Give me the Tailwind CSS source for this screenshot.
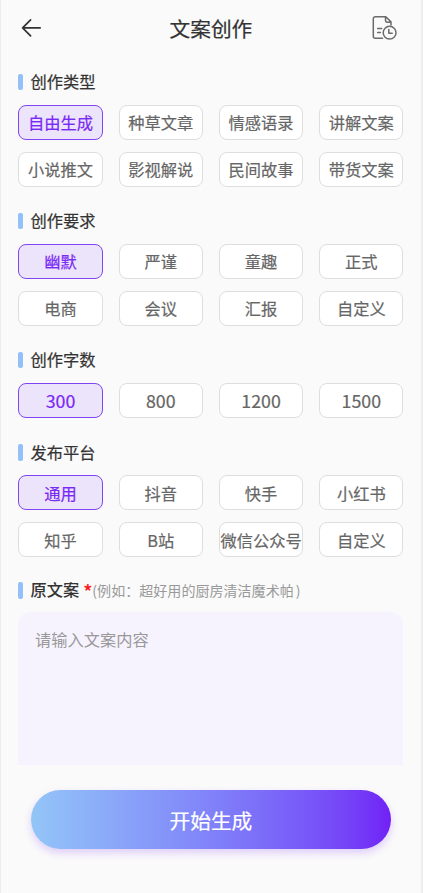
<!DOCTYPE html>
<html lang="zh-CN">
<head>
<meta charset="utf-8">
<meta name="viewport" content="width=device-width, initial-scale=1">
<title>文案创作</title>
<script src="https://cdn.jsdelivr.net/npm/@tailwindcss/browser@4"></script>
</head>
<body class="bg-[#fafafa]">
<main class="flex h-[893px] w-[423px] flex-col overflow-hidden border-l border-r-2 border-[#ededed] bg-[#fafafa] pl-[17.4px] pr-[17.6px] font-['Noto_Sans_CJK_SC',sans-serif] text-[16.25px] font-normal text-[#333] [-webkit-text-stroke:0.2px]">
  <header class="grid h-[56px] shrink-0 grid-cols-[60px_1fr_60px] items-center">
    <button class="pl-[2.6px]" aria-label="返回">
      <svg class="block h-[20px] w-[21px]" viewBox="0 0 21 20" fill="none" stroke="#333" stroke-width="1.7" stroke-linecap="round" stroke-linejoin="round"><path d="M9.6 1.8 1.6 9.8l8 8M1.6 9.8h17.6"/></svg>
    </button>
    <h1 class="text-center text-[20.7px] leading-none">文案创作</h1>
    <button class="flex justify-end pr-[6px]" aria-label="历史记录">
      <svg class="block h-[26px] w-[26px]" viewBox="0 0 26 26" fill="none" stroke="#6a6a6a" stroke-width="1.5" stroke-linecap="round" stroke-linejoin="round"><path d="M11.5 23.2H4.3a2 2 0 0 1-2-2V3.7a2 2 0 0 1 2-2H14.8l5.2 5.2v3M14.5 2v3.2a2 2 0 0 0 2 2H20M6.7 13.4h4M6.7 17.5h2.6"/><circle cx="18.6" cy="17.7" r="6.4"/><path d="M17.8 14.6v3.7h3.4"/></svg>
    </button>
  </header>

  <section class="mt-[14px]">
    <h2 class="flex h-[24px] items-center gap-[7px] leading-none"><i class="h-[16.5px] w-[5px] rounded-[2px] bg-[#93c0f9]"></i><span class="-translate-y-[1px]">创作类型</span></h2>
    <div class="mt-[11px] grid grid-cols-4 gap-x-[16.2px] gap-y-[11.8px] text-[#666] *:flex *:h-[35px] *:items-center *:justify-center *:whitespace-nowrap *:rounded-[8px] *:border *:leading-none">
      <button class="border-[#8144f5] bg-[#ebe4fa] text-[#7a28f5]">自由生成</button>
      <button class="border-[#dedede] bg-white">种草文章</button>
      <button class="border-[#dedede] bg-white">情感语录</button>
      <button class="border-[#dedede] bg-white">讲解文案</button>
      <button class="border-[#dedede] bg-white">小说推文</button>
      <button class="border-[#dedede] bg-white">影视解说</button>
      <button class="border-[#dedede] bg-white">民间故事</button>
      <button class="border-[#dedede] bg-white">带货文案</button>
    </div>
  </section>

  <section class="mt-[22.3px]">
    <h2 class="flex h-[24px] items-center gap-[7px] leading-none"><i class="h-[16.5px] w-[5px] rounded-[2px] bg-[#93c0f9]"></i><span class="-translate-y-[1px]">创作要求</span></h2>
    <div class="mt-[11px] grid grid-cols-4 gap-x-[16.2px] gap-y-[11.8px] text-[#666] *:flex *:h-[35px] *:items-center *:justify-center *:whitespace-nowrap *:rounded-[8px] *:border *:leading-none">
      <button class="border-[#8144f5] bg-[#ebe4fa] text-[#7a28f5]">幽默</button>
      <button class="border-[#dedede] bg-white">严谨</button>
      <button class="border-[#dedede] bg-white">童趣</button>
      <button class="border-[#dedede] bg-white">正式</button>
      <button class="border-[#dedede] bg-white">电商</button>
      <button class="border-[#dedede] bg-white">会议</button>
      <button class="border-[#dedede] bg-white">汇报</button>
      <button class="border-[#dedede] bg-white">自定义</button>
    </div>
  </section>

  <section class="mt-[22.3px]">
    <h2 class="flex h-[24px] items-center gap-[7px] leading-none"><i class="h-[16.5px] w-[5px] rounded-[2px] bg-[#93c0f9]"></i><span class="-translate-y-[1px]">创作字数</span></h2>
    <div class="mt-[11px] grid grid-cols-4 gap-x-[16.2px] text-[17.8px] text-[#666] *:flex *:h-[35px] *:items-center *:justify-center *:rounded-[8px] *:border *:leading-none">
      <button class="border-[#8144f5] bg-[#ebe4fa] text-[#7a28f5]">300</button>
      <button class="border-[#dedede] bg-white">800</button>
      <button class="border-[#dedede] bg-white">1200</button>
      <button class="border-[#dedede] bg-white">1500</button>
    </div>
  </section>

  <section class="mt-[22.3px]">
    <h2 class="flex h-[24px] items-center gap-[7px] leading-none"><i class="h-[16.5px] w-[5px] rounded-[2px] bg-[#93c0f9]"></i><span>发布平台</span></h2>
    <div class="mt-[11px] grid grid-cols-4 gap-x-[16.2px] gap-y-[11.8px] text-[#666] *:flex *:h-[35px] *:items-center *:justify-center *:whitespace-nowrap *:rounded-[8px] *:border *:leading-none">
      <button class="border-[#8144f5] bg-[#ebe4fa] text-[#7a28f5]">通用</button>
      <button class="border-[#dedede] bg-white">抖音</button>
      <button class="border-[#dedede] bg-white">快手</button>
      <button class="border-[#dedede] bg-white">小红书</button>
      <button class="border-[#dedede] bg-white">知乎</button>
      <button class="border-[#dedede] bg-white">B站</button>
      <button class="border-[#dedede] bg-white">微信公众号</button>
      <button class="border-[#dedede] bg-white">自定义</button>
    </div>
  </section>

  <section class="mt-[21px]">
    <h2 class="flex h-[24px] items-center leading-none"><i class="mr-[7px] h-[16.5px] w-[5px] rounded-[2px] bg-[#93c0f9]"></i><span class="-translate-y-[1px] font-medium [-webkit-text-stroke:0]">原文案</span><span class="ml-[4px] text-[19px] font-medium text-[#ff1a1a]">*</span><span class="text-[14.05px] text-[#999] [-webkit-text-stroke:0]">(<span>例如：超好用的厨房清洁魔术帕</span><span class="ml-[2px]">)</span></span></h2>
    <div class="mt-[9.5px] h-[153px] rounded-t-[13px] bg-[#f6f3ff] px-[16.7px] pt-[19px] leading-[16px] text-[#999] [-webkit-text-stroke:0]">请输入文案内容</div>
  </section>

  <button class="mx-[12.7px] mt-[25.5px] flex h-[59px] shrink-0 items-center justify-center rounded-full bg-linear-to-r from-[#93c5f7] to-[#7120f6] text-[20.7px] leading-none text-white shadow-[0_4px_9px_rgba(113,32,246,0.2)]"><span class="translate-y-[0.5px]">开始生成</span></button>
</main>
</body>
</html>
